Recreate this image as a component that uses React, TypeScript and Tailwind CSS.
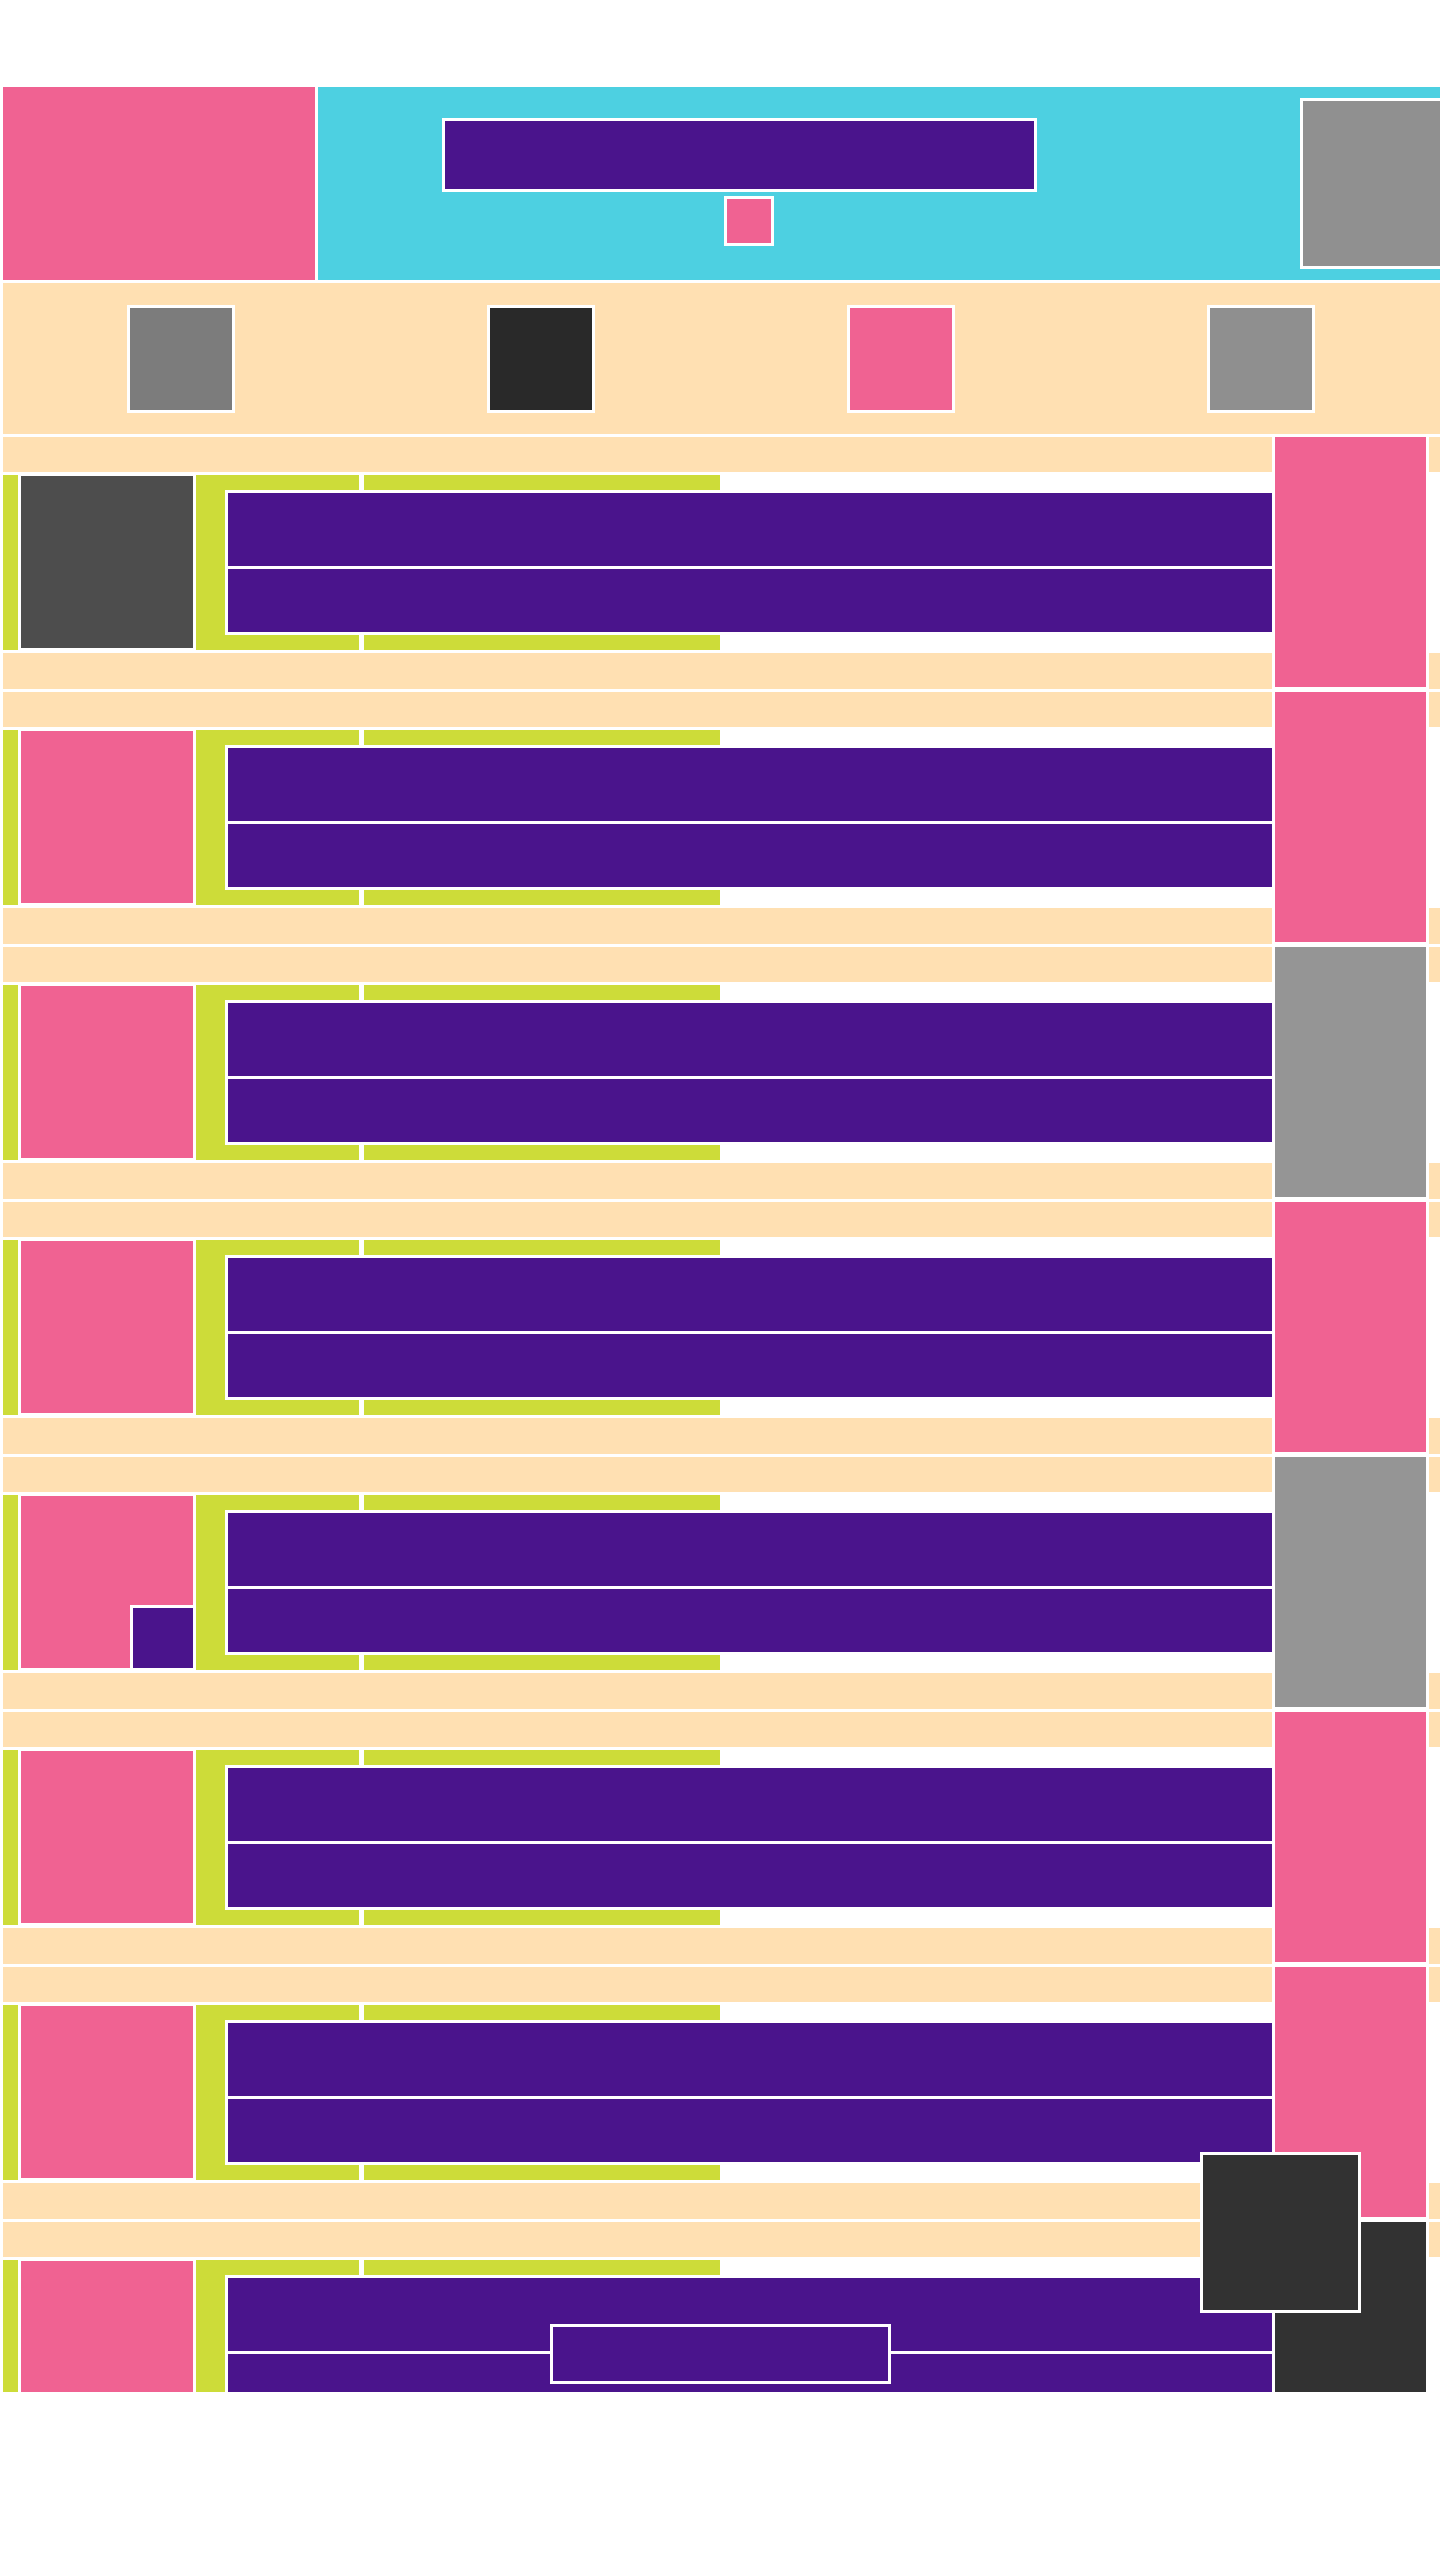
import React from "react";

const PINK = "bg-[#f06292]";

const sideColors = [
  "bg-[#f06292]",
  "bg-[#f06292]",
  "bg-[#959595]",
  "bg-[#f06292]",
  "bg-[#959595]",
  "bg-[#f06292]",
  "bg-[#f06292]",
  "bg-[#323232]",
];

function Unit({ index }: { index: number }) {
  return (
    <div className="flex gap-[3px] h-[252px] shrink-0">
      <div className="w-[1269px] shrink-0 flex flex-col gap-[3px] overflow-hidden">
        <div className="h-[35px] bg-[#ffe0b2]" />
        <div className="h-[175px] flex">
          <div className="w-[15px] bg-[#cddc39]" />
          <div className="w-[178px] bg-white">
            <div
              className={`ml-[3px] mt-[1px] w-[172px] h-[172px] relative ${
                index === 0 ? "bg-[#4d4d4d]" : PINK
              }`}
            >
              {index === 4 && (
                <div className="absolute right-0 bottom-0 w-[63px] h-[63px] border-t-[3px] border-l-[3px] border-white bg-[#4a148c]" />
              )}
            </div>
          </div>
          <div className="flex-1 relative">
            <div className="flex h-full">
              <div className="w-[163px] bg-[#cddc39]" />
              <div className="w-[5px] bg-white" />
              <div className="w-[356px] bg-[#cddc39]" />
              <div className="flex-1 bg-white" />
            </div>
            <div className="absolute left-[29px] top-[15px] right-0 h-[145px] border-[3px] border-r-0 border-white bg-white flex flex-col gap-[3px]">
              <div className="h-[73px] bg-[#4a148c]" />
              <div className="flex-1 bg-[#4a148c]" />
            </div>
          </div>
        </div>
        <div className="h-[36px] bg-[#ffe0b2]" />
      </div>
      <div className={`w-[151px] h-[250px] shrink-0 ${sideColors[index]}`} />
      <div className="flex-1 flex flex-col gap-[3px]">
        <div className="h-[35px] bg-[#ffe0b2]" />
        <div className="h-[175px] bg-white" />
        <div className="h-[36px] bg-[#ffe0b2]" />
      </div>
    </div>
  );
}

export default function App() {
  return (
    <div className="w-[1440px] min-h-[2560px] overflow-hidden bg-white pt-[87px]">
      <div className="ml-[3px] w-[1480px] flex flex-col gap-[3px]">
        {/* Header */}
        <div className="flex gap-[3px] h-[193px]">
          <div className="w-[312px] bg-[#f06292]" />
          <div className="flex-1 bg-[#4dd0e1] flex">
            <div className="pl-[124px] pt-[31px] flex flex-col">
              <div className="w-[595px] h-[74px] border-[3px] border-white bg-[#4a148c]" />
              <div className="mt-[4px] ml-[282px] w-[50px] h-[50px] border-[3px] border-white bg-[#f06292]" />
            </div>
            <div className="ml-[263px] mt-[11px] w-[160px] h-[171px] border-[3px] border-white bg-[#909090]" />
          </div>
        </div>

        {/* Nav */}
        <div className="h-[151px] bg-[#ffe0b2] flex items-center pl-[124px] gap-[252px]">
          <div className="w-[108px] h-[108px] shrink-0 border-[3px] border-white bg-[#7c7c7c]" />
          <div className="w-[108px] h-[108px] shrink-0 border-[3px] border-white bg-[#292929]" />
          <div className="w-[108px] h-[108px] shrink-0 border-[3px] border-white bg-[#f06292]" />
          <div className="w-[108px] h-[108px] shrink-0 border-[3px] border-white bg-[#8f8f8f]" />
        </div>

        {/* Rows */}
        <div className="relative h-[1955px] overflow-hidden flex flex-col gap-[3px]">
          {sideColors.map((_, i) => (
            <Unit key={i} index={i} />
          ))}
          <div className="absolute left-[1197px] top-[1715px] w-[161px] h-[161px] border-[3px] border-white bg-[#323232]" />
          <div className="absolute left-[547px] top-[1887px] w-[341px] h-[60px] border-[3px] border-white bg-[#4a148c]" />
        </div>
      </div>
    </div>
  );
}
